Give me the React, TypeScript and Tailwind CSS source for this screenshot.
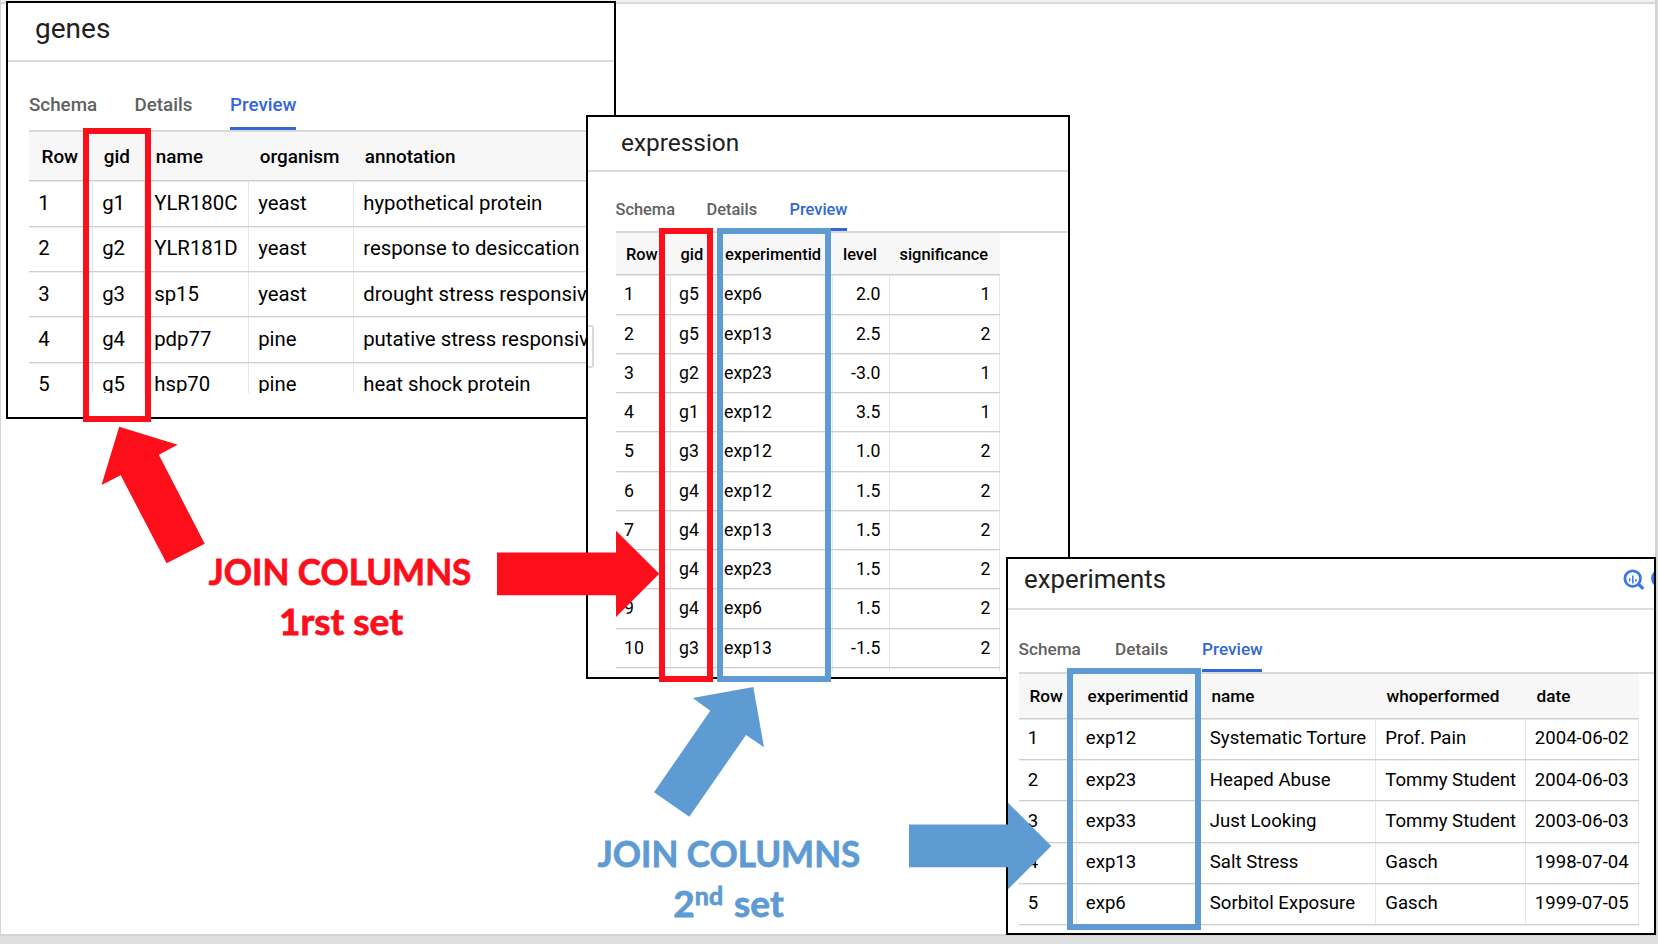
import React from "react";

type Column = { name: string; cell: string; align?: string; headPad?: string };

type TableStyle = {
  row: string;
  head: string;
  headPad: string;
  pad: string;
  text: string;
};

function TitleBar({ className, children }: { className: string; children: React.ReactNode }) {
  return (
    <div className={`flex shrink-0 items-center justify-between border-[#dcdcdc] text-[#212121] ${className}`}>
      {children}
    </div>
  );
}

function Tabs({ className, tab, widths }: { className: string; tab: string; widths: string[] }) {
  return (
    <div className={`flex shrink-0 items-end font-medium text-[#616161] ${className}`}>
      <span className={`border-b-[3px] border-transparent ${tab} ${widths[0]}`}>Schema</span>
      <span className={`border-b-[3px] border-transparent ${tab} ${widths[1]}`}>Details</span>
      <span className={`border-b-[3px] border-[#3367d6] text-[#3367d6] ${tab} ${widths[2]}`}>Preview</span>
    </div>
  );
}

function DataTable({ columns, rows, look }: { columns: Column[]; rows: string[][]; look: TableStyle }) {
  return (
    <div className="flex flex-col text-black">
      <div className={`flex shrink-0 border-b border-[#d0d0d0] bg-[#f7f7f7] font-medium shadow-[0_1px_0_#e6e6e6] ${look.head}`}>
        {columns.map((c) => (
          <div key={c.name} className={`flex shrink-0 items-center whitespace-nowrap ${c.cell} ${c.headPad ?? look.headPad}`}>
            {c.name}
          </div>
        ))}
      </div>
      {rows.map((r) => (
        <div key={r[0]} className={`flex shrink-0 border-b border-[#cfcfcf] shadow-[0_1px_0_#efefef] ${look.row}`}>
          {r.map((value, i) => (
            <div
              key={i}
              className={`flex shrink-0 items-center whitespace-nowrap border-r border-[#e6e6e6] ${look.text} ${columns[i].cell} ${columns[i].align ?? look.pad}`}
            >
              {value}
            </div>
          ))}
        </div>
      ))}
    </div>
  );
}

const geneColumns: Column[] = [
  { name: "Row", cell: "w-16", headPad: "pl-[12.5px]" },
  { name: "gid", cell: "w-[52px]" },
  { name: "name", cell: "w-[104px]" },
  { name: "organism", cell: "w-[105px]" },
  { name: "annotation", cell: "w-[300px]" },
];

const genes = [
  ["1", "g1", "YLR180C", "yeast", "hypothetical protein"],
  ["2", "g2", "YLR181D", "yeast", "response to desiccation"],
  ["3", "g3", "sp15", "yeast", "drought stress responsive"],
  ["4", "g4", "pdp77", "pine", "putative stress responsive"],
  ["5", "g5", "hsp70", "pine", "heat shock protein"],
];

const expressionColumns: Column[] = [
  { name: "Row", cell: "w-[55px]", headPad: "pl-[10.5px]" },
  { name: "gid", cell: "w-[45px]" },
  { name: "experimentid", cell: "w-[117px]", headPad: "pl-[9.5px]" },
  { name: "level", cell: "w-[57px]", align: "justify-end pr-2", headPad: "pl-[10.5px]" },
  { name: "significance", cell: "w-[110px]", align: "justify-end pr-2" },
];

const expression = [
  ["1", "g5", "exp6", "2.0", "1"],
  ["2", "g5", "exp13", "2.5", "2"],
  ["3", "g2", "exp23", "-3.0", "1"],
  ["4", "g1", "exp12", "3.5", "1"],
  ["5", "g3", "exp12", "1.0", "2"],
  ["6", "g4", "exp12", "1.5", "2"],
  ["7", "g4", "exp13", "1.5", "2"],
  ["8", "g4", "exp23", "1.5", "2"],
  ["9", "g4", "exp6", "1.5", "2"],
  ["10", "g3", "exp13", "-1.5", "2"],
  ["", "", "", "", ""],
];

const experimentColumns: Column[] = [
  { name: "Row", cell: "w-[58px]" },
  { name: "experimentid", cell: "w-[124px]" },
  { name: "name", cell: "w-[175px]" },
  { name: "whoperformed", cell: "w-[150px]", align: "pl-[9.3px]" },
  { name: "date", cell: "w-[113px]" },
];

const experiments = [
  ["1", "exp12", "Systematic Torture", "Prof. Pain", "2004-06-02"],
  ["2", "exp23", "Heaped Abuse", "Tommy Student", "2004-06-03"],
  ["3", "exp33", "Just Looking", "Tommy Student", "2003-06-03"],
  ["4", "exp13", "Salt Stress", "Gasch", "1998-07-04"],
  ["5", "exp6", "Sorbitol Exposure", "Gasch", "1999-07-05"],
];

function QueryIcon() {
  return (
    <svg className="mt-px h-[22px] w-[31px] shrink-0" viewBox="0 0 31 22" fill="none" stroke="#3b78e7">
      <circle cx="9.7" cy="9.6" r="7.8" strokeWidth="2.8" />
      <path d="M15.3 15L20.3 19.9" strokeWidth="3.2" />
      <path d="M6.7 9.2V12.6M9.8 6.4V14.6M12.9 10V12.6" strokeWidth="1.5" />
      <circle cx="37" cy="9.3" r="7.5" strokeWidth="3" />
    </svg>
  );
}

export default function App() {
  return (
    <div className="relative h-[944px] w-[1658px] overflow-hidden bg-[#dedede] font-['Roboto',sans-serif]">
      <div className="flex h-[936px] w-[1657px] flex-col border-b-2 border-l border-r-2 border-[#d4d4d4] bg-white">
        <div className="h-1 border-b-2 border-[#d9d9d9] bg-[#f1f1f1]" />
      </div>

      <section className="absolute left-[6px] top-px flex h-[418px] w-[610px] flex-col overflow-hidden border-2 border-black bg-white">
        <TitleBar className="h-[59px] border-b-2 pb-[5px] pl-[27px] text-[28px]">genes</TitleBar>
        <Tabs
          className="h-[68px] pl-[21px] text-[18.8px] leading-6"
          tab="pb-[10px]"
          widths={["w-[105.5px]", "w-[95.5px]", "w-[66px]"]}
        />
        <div className="ml-[21px] h-[263px] overflow-hidden border-t-2 border-[#d9d9d9]">
          <DataTable
            columns={geneColumns}
            rows={genes}
            look={{
              head: "h-[49.3px] pt-0.5 text-[18.9px]",
              headPad: "pl-[10.8px]",
              row: "h-[45.35px] text-[20.35px]",
              pad: "pl-[9.2px]",
              text: "pb-[0.8px]",
            }}
          />
        </div>
      </section>

      <section className="absolute left-[586px] top-[115px] flex h-[564px] w-[484px] flex-col overflow-hidden border-2 border-black bg-white">
        <TitleBar className="h-[55px] border-b-2 pl-[33px] text-[24.4px]">expression</TitleBar>
        <Tabs
          className="h-[59px] pl-[27.5px] text-[16.4px] leading-5"
          tab="pb-2"
          widths={["w-[91px]", "w-[83px]", "w-[57.5px]"]}
        />
        <div className="ml-[27.5px] h-[440px] overflow-hidden border-t-2 border-[#d9d9d9]">
          <div className="w-[384px]">
            <DataTable
              columns={expressionColumns}
              rows={expression}
              look={{
                head: "h-[42.3px] pt-[3px] text-[16.4px]",
                headPad: "pl-[10px]",
                row: "h-[39.28px] text-[17.7px]",
                pad: "pl-[8.5px]",
                text: "pt-[0.3px]",
              }}
            />
          </div>
        </div>
        <div className="grow bg-[#fafafa]" />
        <div className="absolute left-0 top-[208px] h-[43px] w-[6px] rounded-r-[3px] border-2 border-l-0 border-[#dadada]" />
      </section>

      <section className="absolute left-[1006px] top-[557px] flex h-[378px] w-[650px] flex-col overflow-hidden border-2 border-black bg-white">
        <TitleBar className="h-[51px] border-b-2 pb-2 pl-4 text-[25.8px]">
          <span>experiments</span>
          <QueryIcon />
        </TitleBar>
        <Tabs
          className="h-[62px] pl-[10.5px] text-[17.2px] leading-5"
          tab="pb-[10px]"
          widths={["w-[96.5px]", "w-[87px]", "w-[60px]"]}
        />
        <div className="ml-[11px] border-t-2 border-[#d9d9d9]">
          <div className="w-[620px]">
            <DataTable
              columns={experimentColumns}
              rows={experiments}
              look={{
                head: "h-[45px] pt-px text-[17.2px]",
                headPad: "pl-[10.5px]",
                row: "h-[41.2px] text-[18.6px]",
                pad: "pl-[8.8px]",
                text: "pt-[0.6px]",
              }}
            />
          </div>
        </div>
      </section>

      <div className="absolute left-[83px] top-[128px] h-[294px] w-[68px] border-[6px] border-[#fd0e1b]" />
      <div className="absolute left-[659px] top-[228px] h-[454px] w-[54px] border-[6px] border-[#fd0e1b]" />
      <div className="absolute left-[717px] top-[228px] h-[454px] w-[114px] border-[6px] border-[#5f9bd3]" />
      <div className="absolute left-[1067px] top-[668px] h-[262px] w-[134px] border-[6px] border-[#5f9bd3]" />

      <svg className="absolute left-0 top-0 h-[944px] w-[1658px]" viewBox="0 0 1658 944">
        <g fill="#fd0e1b">
          <path d="M119.2 426.7L177.7 444.7L158.8 454.7L204.7 543.7L166.6 563.3L120.7 475.3L101.5 485Z" />
          <path d="M497 552.5H616V530.7L659.3 573.8L616 617V595.3H497Z" />
        </g>
        <g fill="#5f9bd3">
          <path d="M753.3 687L764 747.3L746 735L689.3 816.7L654 792.3L710.3 710.7L692.7 698Z" />
          <path d="M909 824.5H1008V802.7L1051.3 846L1008 889.3V867.3H909Z" />
        </g>
      </svg>

      <div className="absolute left-[190px] top-[546px] w-[300px] text-center font-['Lato',sans-serif] text-[37px] font-bold leading-[50px] text-[#fd0e1b] [-webkit-text-stroke:0.8px_#fd0e1b]">
        <p className="scale-x-[0.945]">JOIN COLUMNS</p>
        <p className="pl-0.5">1rst set</p>
      </div>
      <div className="absolute left-[578.5px] top-[828px] w-[300px] text-center font-['Lato',sans-serif] text-[37px] font-bold leading-[50px] text-[#5f9bd3] [-webkit-text-stroke:0.8px_#5f9bd3]">
        <p className="scale-x-[0.945]">JOIN COLUMNS</p>
        <p>
          2<span className="relative -top-3 text-[25px] leading-none">nd</span>
          <span className="pl-0.5"> set</span>
        </p>
      </div>
    </div>
  );
}
